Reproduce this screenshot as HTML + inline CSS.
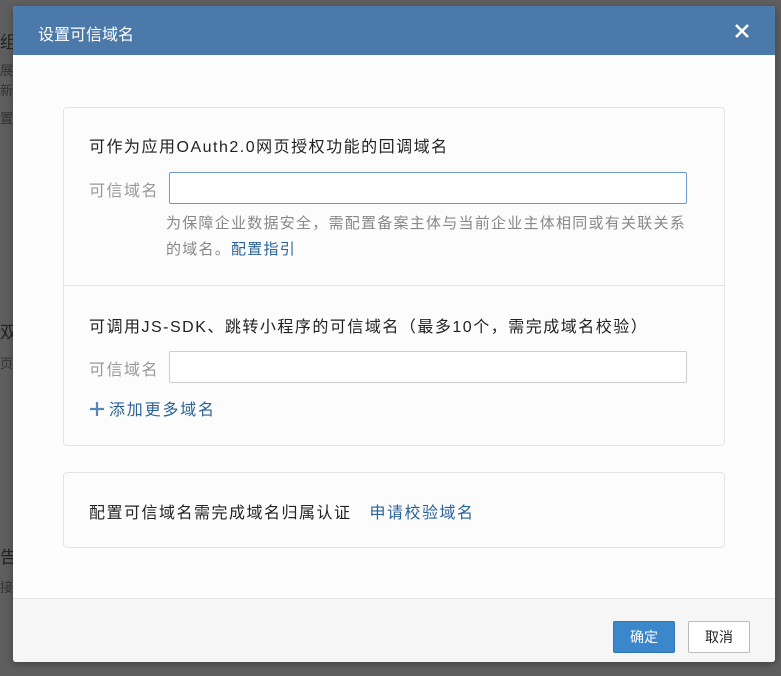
<!DOCTYPE html>
<html><head><meta charset="utf-8"><style>
*{margin:0;padding:0;box-sizing:border-box}
body{width:781px;height:676px;overflow:hidden;background:#5e5e5e;font-family:"Liberation Sans","Noto Sans CJK SC",sans-serif;position:relative}
.a{position:absolute;white-space:nowrap}
.dlg{position:absolute;left:13px;top:6px;width:762px;height:656px;background:#fdfdfd;border-radius:3px;overflow:hidden;box-shadow:0 2px 8px rgba(0,0,0,.3)}
.hd{position:absolute;left:0;top:0;width:100%;height:49px;background:#4b79aa;color:#fff;font-size:16px}
.box{position:absolute;border:1px solid #e4e4e4;border-radius:4px;background:#fcfcfc}
.inp{position:absolute;height:32px;background:#fff;border:1px solid #cfcfcf;border-radius:2px}
.t{font-size:16px;color:#222;letter-spacing:1.5px}
.lbl{font-size:16px;color:#999;letter-spacing:1.5px}
.h{font-size:15px;color:#888;letter-spacing:1.25px}
.lk{color:#2b6298}
.ft{position:absolute;left:0;top:592px;width:100%;height:64px;background:#f6f6f6;border-top:1px solid #e4e4e4}
.btn{position:absolute;width:62px;height:32px;border-radius:2px;font-size:14px;text-align:center;line-height:30px}
</style></head><body>
<div class="a" style="left:0;top:28px;font-size:17px;color:#222">组</div>
<div class="a" style="left:0;top:60px;font-size:13px;color:#333">展</div>
<div class="a" style="left:0;top:80px;font-size:13px;color:#333">新</div>
<div class="a" style="left:0;top:108px;font-size:13px;color:#333">置</div>
<div class="a" style="left:0;top:318px;font-size:17px;color:#222">双</div>
<div class="a" style="left:0;top:353px;font-size:13px;color:#333">页</div>
<div class="a" style="left:0;top:543px;font-size:17px;color:#222">告</div>
<div class="a" style="left:0;top:577px;font-size:13px;color:#333">接</div>
<div class="dlg">
 <div class="hd"><div class="a" style="left:25px;top:15px">设置可信域名</div>
  <svg class="a" style="left:721px;top:17px" width="16" height="16" viewBox="0 0 16 16"><path d="M2 2L14 14M14 2L2 14" stroke="#fff" stroke-width="2.6"/></svg></div>
 <div class="box" style="left:50px;top:101px;width:662px;height:339px"></div>
 <div class="a" style="left:50px;top:279px;width:662px;height:1px;background:#e4e4e4"></div>
 <div class="a t" style="left:76px;top:127px">可作为应用OAuth2.0网页授权功能的回调域名</div>
 <div class="a lbl" style="left:76px;top:171px">可信域名</div>
 <div class="inp" style="left:156px;top:166px;width:518px;border-color:#6e9bcf"></div>
 <div class="a h" style="left:153px;top:206px">为保障企业数据安全，需配置备案主体与当前企业主体相同或有关联关系</div>
 <div class="a h" style="left:153px;top:232px">的域名。<span class="lk">配置指引</span></div>
 <div class="a t" style="left:76px;top:307px">可调用JS-SDK、跳转小程序的可信域名（最多10个，需完成域名校验）</div>
 <div class="a lbl" style="left:76px;top:350px">可信域名</div>
 <div class="inp" style="left:156px;top:345px;width:518px"></div>
 <svg class="a" style="left:76px;top:395px" width="16" height="16" viewBox="0 0 16 16"><path d="M8 1V15M1 8H15" stroke="#5b85b3" stroke-width="2.2"/></svg>
 <div class="a lk" style="left:96px;top:390px;font-size:16px;letter-spacing:1.8px">添加更多域名</div>
 <div class="box" style="left:50px;top:466px;width:662px;height:76px"></div>
 <div class="a t" style="left:76px;top:493px">配置可信域名需完成域名归属认证 <span class="lk" style="margin-left:12px">申请校验域名</span></div>
 <div class="ft">
  <div class="btn" style="left:600px;top:22px;background:#3a87cc;border:1px solid #2f76b8;color:#fff">确定</div>
  <div class="btn" style="left:675px;top:22px;background:#fff;border:1px solid #bbb;color:#222">取消</div>
 </div>
</div>
</body></html>
